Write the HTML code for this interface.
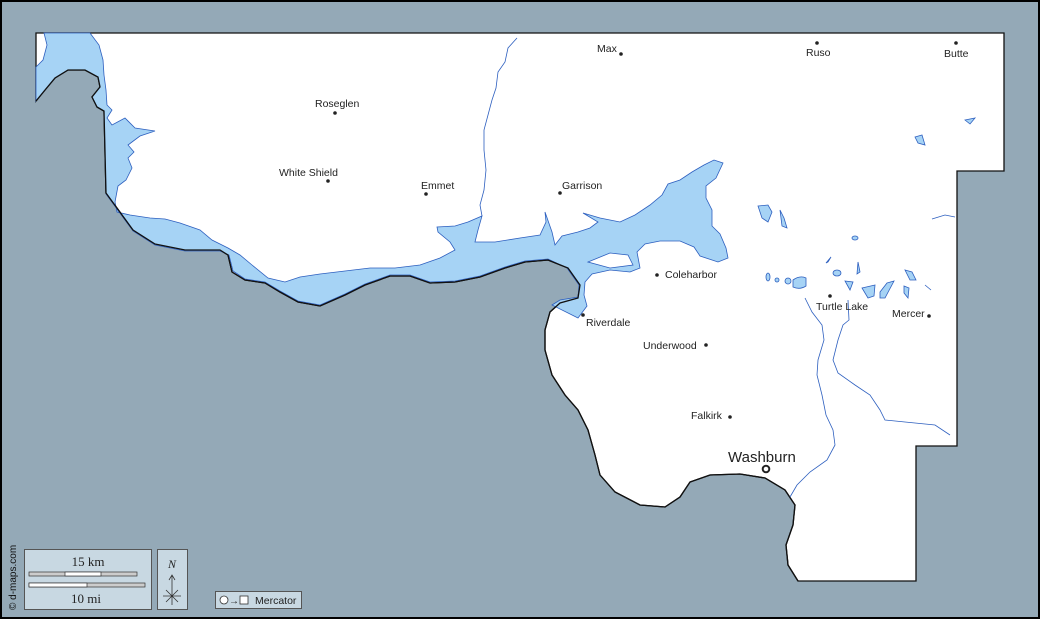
<!DOCTYPE html>
<html><head><style>
html,body{margin:0;padding:0;width:1040px;height:619px;overflow:hidden;background:#000}
svg{display:block}
text{font-family:"Liberation Sans",sans-serif;font-size:10.5px;fill:#222}
</style></head><body>
<svg width="1040" height="619" viewBox="0 0 1040 619">
<rect x="2" y="2" width="1036" height="615" fill="#94a9b7"/>
<!-- county -->
<path d="M36,33 L1004,33 L1004,171 L957,171 L957,446 L916,446 L916,581 L798,581 L788,565 L786,545 L793,525 L795,505 L785,490 L765,478 L740,474 L710,475 L690,482 L680,497 L665,507 L640,505 L615,492 L600,475 L595,455 L588,430 L578,410 L565,395 L552,375 L545,350 L545,330 L550,312 L560,303 L578,298 L580,285 L568,268 L548,260 L525,262 L505,268 L480,277 L455,282 L430,283 L410,276 L390,276 L365,285 L345,295 L320,306 L298,302 L280,292 L265,283 L245,280 L232,272 L228,255 L220,250 L185,250 L155,244 L133,230 L106,193 L104,111 L97,107 L92,97 L100,87 L98,77 L85,70 L68,70 L55,78 L45,90 L36,101 Z" fill="#fff" stroke="#111" stroke-width="1.3"/>
<!-- lake -->
<path d="M36,101 L36,67 L43,60 L47,45 L44,33 L90,33 L99,45 L103,60 L104,75 L106,90 L107,105 L112,110 L107,118 L112,125 L125,118 L135,128 L155,131 L140,136 L128,145 L134,152 L128,158 L132,168 L126,180 L118,186 L115,202 L117,212 L130,215 L150,218 L165,219 L180,223 L200,230 L212,240 L228,248 L240,255 L252,265 L268,278 L285,282 L300,277 L320,274 L345,271 L370,268 L395,268 L420,265 L440,258 L455,250 L450,242 L438,232 L437,227 L455,226 L468,222 L482,216 L478,230 L475,242 L495,242 L520,238 L540,235 L546,222 L545,212 L552,232 L555,245 L562,236 L578,232 L590,228 L598,222 L583,213 L600,218 L620,222 L635,215 L650,205 L662,195 L668,184 L680,180 L692,172 L704,165 L714,160 L723,163 L716,178 L706,186 L706,198 L712,210 L712,226 L720,234 L726,248 L728,258 L718,262 L700,256 L694,247 L680,241 L660,241 L645,244 L637,252 L640,268 L630,272 L610,270 L592,274 L585,282 L584,295 L587,306 L578,318 L552,305 L560,300 L578,297 L579,285 L567,268 L548,259 L525,261 L505,267 L480,276 L455,281 L430,282 L410,275 L390,275 L365,284 L345,294 L320,305 L298,301 L280,291 L265,282 L245,279 L233,271 L229,255 L220,251 L185,251 L155,245 L133,231 L106,194 L104,111 L97,107 L92,97 L100,87 L98,77 L85,70 L68,70 L55,78 L45,90 Z" fill="#a6d3f5" stroke="#2d5fbf" stroke-width="0.8"/>
<path d="M588,262 L610,253 L628,255 L633,265 L610,268 Z" fill="#fff" stroke="#2d5fbf" stroke-width="0.8"/>
<path d="M36,101 L45,90 L55,78 L68,70 L85,70 L98,77 L100,87 L92,97 L97,107 L104,111 L106,193 L133,230 L155,244 L185,250 L220,250 L228,255 L232,272 L245,280 L265,283 L280,292 L298,302 L320,306 L345,295 L365,285 L390,276 L410,276 L430,283 L455,282 L480,277 L505,268 L525,262 L548,260 L568,268 L580,285 L578,298 L560,303 L550,312 L545,330 L545,350 L552,375 L565,395 L578,410 L588,430 L595,455 L600,475 L615,492 L640,505 L665,507 L680,497 L690,482 L710,475 L740,474 L765,478 L785,490 L795,505 L793,525 L786,545 L788,565 L798,581" fill="none" stroke="#111" stroke-width="1.3"/>
<!-- rivers -->
<g fill="none" stroke="#2d5fbf" stroke-width="0.8">
<path d="M517,38 L508,48 L505,62 L498,72 L496,88 L492,100 L488,115 L484,130 L484,150 L486,170 L484,190 L480,205 L482,216"/>
<path d="M805,298 L812,312 L822,325 L824,340 L818,360 L817,375 L822,395 L826,415 L833,430 L835,445 L827,460 L810,472 L797,485 L790,497"/>
<path d="M848,300 L849,320 L843,325 L838,340 L833,360 L838,373 L855,385 L870,395 L880,410 L885,420 L905,422 L935,425 L950,435"/>
<path d="M932,219 L945,215 L955,217"/>
</g>
<!-- small lakes -->
<g fill="#a6d3f5" stroke="#2d5fbf" stroke-width="0.8">
<path d="M758,206 L768,205 L772,212 L768,222 L762,218 Z"/><path d="M780,210 L784,218 L787,228 L782,226 Z"/>
<ellipse cx="855" cy="238" rx="3" ry="2"/>
<ellipse cx="768" cy="277" rx="2" ry="4"/><ellipse cx="777" cy="280" rx="2" ry="2"/><ellipse cx="788" cy="281" rx="3" ry="3"/>
<path d="M793,280 Q800,275 806,278 L806,286 Q800,290 793,287 Z"/>
<path d="M826,263 L831,257 L828,262 Z"/><ellipse cx="837" cy="273" rx="4" ry="3"/><path d="M858,262 L860,272 L857,274 Z"/>
<path d="M845,281 L853,282 L850,290 Z"/><path d="M862,288 L875,285 L874,296 L868,298 Z"/><path d="M880,292 L887,283 L894,281 L885,298 L880,298 Z"/>
<path d="M905,270 L912,272 L916,280 L910,280 Z"/><path d="M904,286 L909,288 L908,298 L904,293 Z"/><path d="M925,285 L931,290 Z"/>
<path d="M915,137 L922,135 L925,145 L918,143 Z"/><path d="M965,120 L975,118 L970,124 Z"/>
</g>
<!-- labels -->
<g fill="#222">
<circle cx="621" cy="54" r="1.8"/><circle cx="817" cy="43" r="1.8"/><circle cx="956" cy="43" r="1.8"/>
<circle cx="335" cy="113" r="1.8"/><circle cx="328" cy="181" r="1.8"/><circle cx="426" cy="194" r="1.8"/><circle cx="560" cy="193" r="1.8"/>
<circle cx="657" cy="275" r="1.8"/><circle cx="583" cy="315" r="1.8"/><circle cx="830" cy="296" r="1.8"/><circle cx="929" cy="316" r="1.8"/>
<circle cx="706" cy="345" r="1.8"/><circle cx="730" cy="417" r="1.8"/>
</g>
<circle cx="766" cy="469" r="3.3" fill="#fff" stroke="#222" stroke-width="2"/>
<text x="597" y="52">Max</text><text x="806" y="56">Ruso</text><text x="944" y="57">Butte</text>
<text x="315" y="107">Roseglen</text><text x="279" y="176">White Shield</text><text x="421" y="189">Emmet</text>
<text x="562" y="189">Garrison</text><text x="665" y="278">Coleharbor</text><text x="586" y="326">Riverdale</text>
<text x="816" y="310">Turtle Lake</text><text x="892" y="317">Mercer</text><text x="643" y="349">Underwood</text>
<text x="691" y="419">Falkirk</text><text x="728" y="462" style="font-size:15px">Washburn</text>
<!-- legend -->
<text transform="translate(16,610) rotate(-90)" style="font-size:10px;fill:#111">© d-maps.com</text>
<rect x="24.5" y="549.5" width="127" height="60" fill="#c8d8e2" stroke="#555"/>
<text x="88" y="566" text-anchor="middle" style="font-family:'Liberation Serif',serif;font-size:13px">15 km</text>
<rect x="29" y="572" width="108" height="4" fill="#ccc" stroke="#333" stroke-width="0.7"/><rect x="65" y="572" width="36" height="4" fill="#fff" stroke="#333" stroke-width="0.7"/>
<rect x="29" y="583" width="116" height="4" fill="#ccc" stroke="#333" stroke-width="0.7"/><rect x="29" y="583" width="58" height="4" fill="#fff" stroke="#333" stroke-width="0.7"/>
<text x="86" y="603" text-anchor="middle" style="font-family:'Liberation Serif',serif;font-size:13px">10 mi</text>
<rect x="157.5" y="549.5" width="30" height="60" fill="#c8d8e2" stroke="#555"/>
<text x="172" y="568" text-anchor="middle" style="font-family:'Liberation Serif',serif;font-size:12px;font-style:italic">N</text>
<path d="M172,576 L172,605 M169,580 L172,575 L175,580 M163,596 L181,596 M166,590 L178,602 M178,590 L166,602" stroke="#333" stroke-width="0.8" fill="none"/>
<rect x="215.5" y="591.5" width="86" height="17" fill="#c8d8e2" stroke="#555"/>
<circle cx="224" cy="600" r="4" fill="#fff" stroke="#333" stroke-width="0.8"/>
<text x="229" y="604" style="font-size:10px">→</text>
<rect x="240" y="596" width="8" height="8" fill="#fff" stroke="#333" stroke-width="0.8"/>
<text x="255" y="604" style="font-size:10.5px">Mercator</text>
</svg>
</body></html>
